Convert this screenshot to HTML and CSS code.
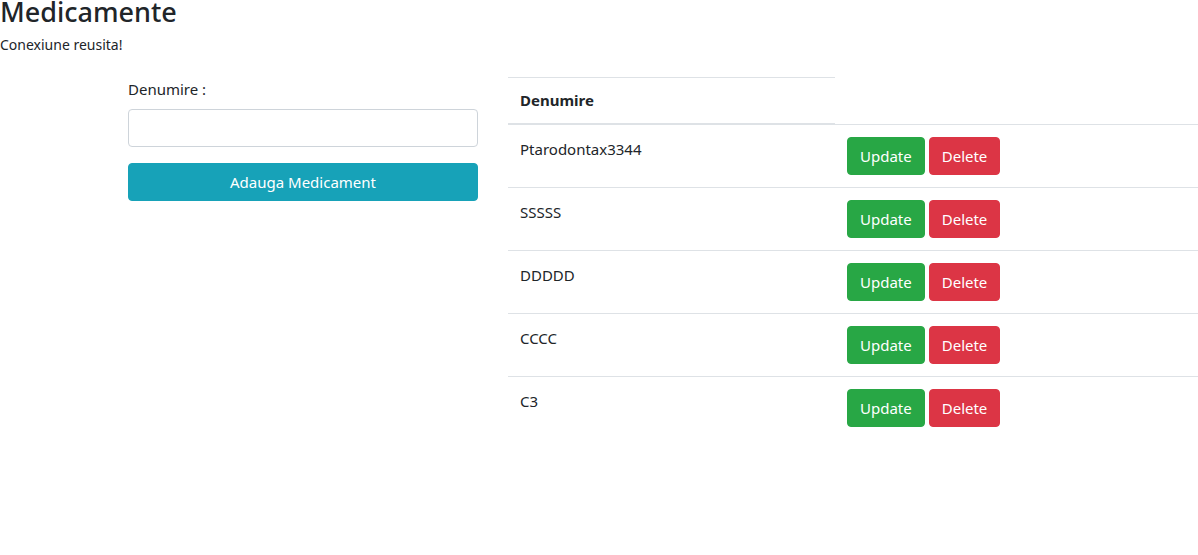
FILE: index.html
```html
<!DOCTYPE html>
<html>
<head>
<meta charset="utf-8">
<link rel="stylesheet" href="styles.css">
</head>
<body>
<h1 class="title">Medicamente</h1>
<p class="status">Conexiune reusita!</p>
<div class="layout">
  <form class="form-col">
    <div class="form-group">
      <label class="label">Denumire :</label>
      <input class="input" type="text">
    </div>
    <button type="button" class="btn btn-info btn-block">Adauga Medicament</button>
  </form>
  <div class="table-col">
    <table class="table">
      <thead>
        <tr><th>Denumire</th></tr>
      </thead>
      <tbody>
        <tr><td class="name">Ptarodontax3344</td><td class="actions"><button class="btn btn-success">Update</button> <button class="btn btn-danger">Delete</button></td></tr>
        <tr><td class="name">SSSSS</td><td class="actions"><button class="btn btn-success">Update</button> <button class="btn btn-danger">Delete</button></td></tr>
        <tr><td class="name">DDDDD</td><td class="actions"><button class="btn btn-success">Update</button> <button class="btn btn-danger">Delete</button></td></tr>
        <tr><td class="name">CCCC</td><td class="actions"><button class="btn btn-success">Update</button> <button class="btn btn-danger">Delete</button></td></tr>
        <tr><td class="name">C3</td><td class="actions"><button class="btn btn-success">Update</button> <button class="btn btn-danger">Delete</button></td></tr>
      </tbody>
    </table>
  </div>
</div>
</body>
</html>
```
FILE: styles.css
```css
* { box-sizing: border-box; }
html, body { margin: 0; padding: 0; background: #fff; }
body {
  font-family: "Noto Sans", "Open Sans", sans-serif;
  font-size: 15px;
  line-height: 24px;
  color: #212529;
}
.title {
  margin: 0;
  font-size: 27px;
  font-weight: 500;
  line-height: 23px;
}
.status {
  margin: 0;
  padding-top: 10px;
  line-height: 24px;
  font-size: 14px;
}
.layout {
  display: flex;
  align-items: flex-start;
  margin-top: 20px;
  padding-left: 128px;
  gap: 30px;
}
.form-col {
  width: 350px;
  flex: none;
}
.form-group { margin-bottom: 16px; }
.label {
  display: block;
  margin-bottom: 8px;
  line-height: 24px;
}
.input {
  display: block;
  width: 100%;
  height: 38px;
  border: 1px solid #ced4da;
  border-radius: 4px;
  padding: 6px 12px;
  font: inherit;
}
.btn {
  display: inline-block;
  font-family: inherit;
  font-size: 15px;
  line-height: 24px;
  padding: 6px 12px;
  border: 1px solid transparent;
  border-radius: 4px;
  color: #fff;
  cursor: pointer;
  vertical-align: middle;
}
.btn-block { display: block; width: 100%; }
.btn-info { background: #17a2b8; border-color: #17a2b8; }
.btn-success { background: #28a745; border-color: #28a745; }
.btn-danger { background: #dc3545; border-color: #dc3545; }
.table-col { flex: 1; }
.table {
  width: 100%;
  border-collapse: collapse;
}
.table th, .table td {
  padding: 12px;
  vertical-align: top;
  border-top: 1px solid #dee2e6;
  text-align: left;
}
.table thead th {
  border-bottom: 2px solid #dee2e6;
  font-weight: 700;
  line-height: 21px;
}
.table .name { width: 327px; }
.actions { font-size: 0; }
.actions .btn + .btn { margin-left: 4px; }
```
